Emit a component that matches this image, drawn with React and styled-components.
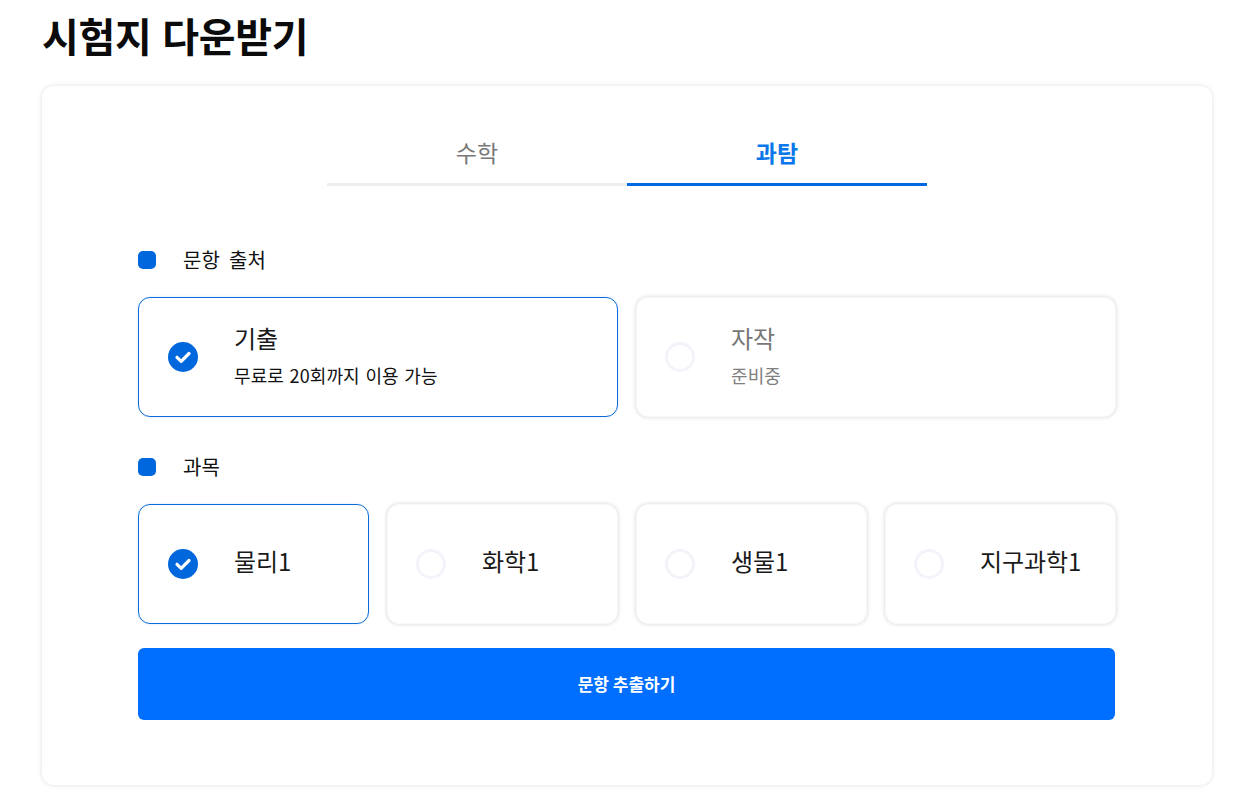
import React from "react";
import styled, { createGlobalStyle } from "styled-components";

const Global = createGlobalStyle`
  html, body { margin: 0; padding: 0; background: #fff; }
  body { font-family: "Noto Sans CJK KR", "Noto Sans", sans-serif; color: #111; }
  * { box-sizing: border-box; }
`;
const Page = styled.div`
  width: 1234px;
  height: 802px;
  padding: 0 22px 0 42px;
  overflow: hidden;
`;
const Title = styled.h1`
  margin: 0;
  height: 86px;
  padding-top: 7px;
  font-size: 40px;
  line-height: 56px;
  font-weight: 700;
  letter-spacing: -0.3px;
  word-spacing: 2px;
  color: #0b0b0b;
`;
const Panel = styled.section`
  width: 1170px;
  height: 699px;
  border-radius: 12px;
  background: #fff;
  box-shadow: 0 0 5px rgba(0, 0, 0, 0.13);
  padding: 46px 96px 0;
`;
const Tabs = styled.div`
  display: flex;
  width: 600px;
  margin: 0 auto 61px;
`;
const Tab = styled.div`
  flex: 1;
  height: 54px;
  text-align: center;
  font-size: 23px;
  line-height: 40px;
  font-weight: ${(p) => (p.$active ? 700 : 400)};
  color: ${(p) => (p.$active ? "#0a78ea" : "#777")};
  border-bottom: 3px solid ${(p) => (p.$active ? "#0068e0" : "#eeeeee")};
`;
const SectionLabel = styled.div`
  display: flex;
  align-items: center;
  gap: 27px;
  height: 26px;
  font-size: 20px;
  line-height: 26px;
  letter-spacing: 0.2px;
  word-spacing: 4px;
  color: #111;
  margin-bottom: 24px;
`;
const Marker = styled.span`
  width: 18px;
  height: 18px;
  border-radius: 5px;
  background: #0068dc;
`;
const Row = styled.div`
  display: grid;
  grid-template-columns: repeat(${(p) => p.$cols}, 1fr);
  gap: 18px;
  width: 978px;
  margin-bottom: ${(p) => p.$mb}px;
`;
const Option = styled.div`
  height: 120px;
  display: flex;
  align-items: center;
  gap: 36px;
  padding-left: ${(p) => (p.$selected ? 29 : 28)}px;
  border-radius: 12px;
  background: #fff;
  border: 1px solid ${(p) => (p.$selected ? "#0a6cd8" : "#f8f8f8")};
  box-shadow: ${(p) => (p.$selected ? "0 0 3px rgba(0,104,220,.15)" : "0 0 4px rgba(0,0,0,.17)")};
`;
const Empty = styled.span`
  flex: none;
  width: 30px;
  height: 30px;
  border-radius: 50%;
  border: 3px solid #f2f4fa;
  background: #fff;
`;
const CheckIcon = styled.svg`
  flex: none;
  width: 30px;
  height: 30px;
`;
const OptionText = styled.div`
  display: flex;
  flex-direction: column;
  gap: 6px;
  padding-bottom: 6px;
`;
const OptionName = styled.div`
  font-size: 24px;
  line-height: 36px;
  color: ${(p) => (p.$muted ? "#777" : "#1a1a1a")};
`;
const SubjectName = styled(OptionName)`
  padding-bottom: 6px;
  letter-spacing: -0.1px;
`;
const OptionSub = styled.div`
  font-size: 18px;
  line-height: 26px;
  letter-spacing: 0.1px;
  word-spacing: 1.5px;
  color: ${(p) => (p.$muted ? "#808080" : "#111")};
`;
const Submit = styled.button`
  display: block;
  width: 977px;
  height: 72px;
  padding: 0 0 2px;
  border: 0;
  border-radius: 6px;
  background: #006eff;
  color: #fff;
  font-family: inherit;
  font-size: 17px;
  font-weight: 700;
`;

const Radio = ({ checked }) =>
  checked ? (
    <CheckIcon viewBox="0 0 30 30">
      <circle cx="15" cy="15" r="15" fill="#0068dc" />
      <path d="M9 15.3l4.2 4 7.8-7.8" fill="none" stroke="#fff" strokeWidth="3.2" strokeLinecap="round" strokeLinejoin="round" />
    </CheckIcon>
  ) : (
    <Empty />
  );

const subjects = ["물리1", "화학1", "생물1", "지구과학1"];

export default function App() {
  return (
    <Page>
      <Global />
      <Title>시험지 다운받기</Title>
      <Panel>
        <Tabs>
          <Tab>수학</Tab>
          <Tab $active>과탐</Tab>
        </Tabs>
        <SectionLabel><Marker />문항 출처</SectionLabel>
        <Row $cols={2} $mb={37}>
          <Option $selected>
            <Radio checked />
            <OptionText>
              <OptionName>기출</OptionName>
              <OptionSub>무료로 20회까지 이용 가능</OptionSub>
            </OptionText>
          </Option>
          <Option>
            <Radio />
            <OptionText>
              <OptionName $muted>자작</OptionName>
              <OptionSub $muted>준비중</OptionSub>
            </OptionText>
          </Option>
        </Row>
        <SectionLabel><Marker />과목</SectionLabel>
        <Row $cols={4} $mb={24}>
          {subjects.map((s, i) => (
            <Option key={s} $selected={i === 0}>
              <Radio checked={i === 0} />
              <SubjectName>{s}</SubjectName>
            </Option>
          ))}
        </Row>
        <Submit>문항 추출하기</Submit>
      </Panel>
    </Page>
  );
}
